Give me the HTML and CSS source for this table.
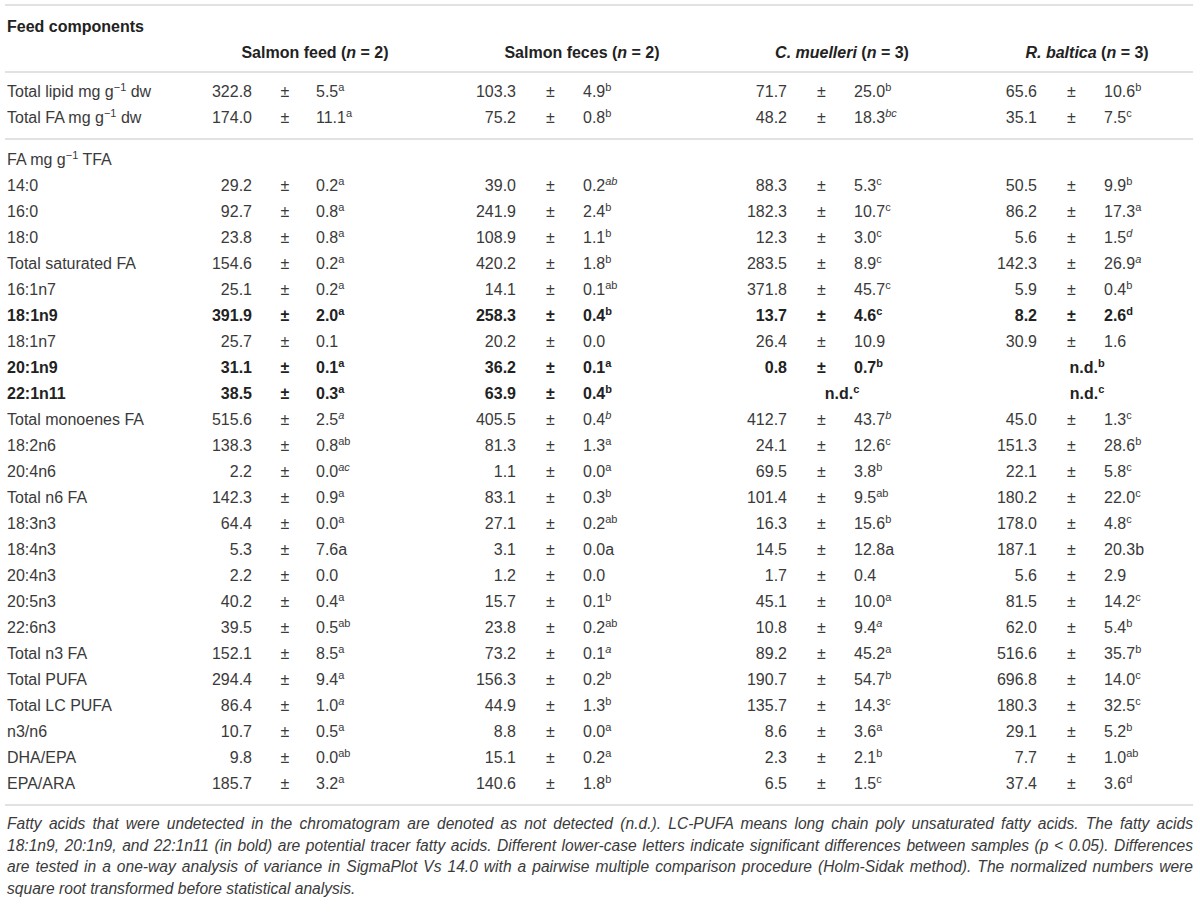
FILE: index.html
```html
<!DOCTYPE html>
<html>
<head>
<meta charset="utf-8">
<link rel="stylesheet" href="styles.css">
</head>
<body>
<div class="page">
<table class="ft">
<colgroup>
<col class="c-lab">
<col class="c-v1"><col class="c-pm1"><col class="c-sd1">
<col class="c-v2"><col class="c-pm"><col class="c-sd2">
<col class="c-v3"><col class="c-pm"><col class="c-sd3">
<col class="c-v4"><col class="c-pm"><col class="c-sd4">
</colgroup>
<thead>
<tr class="first"><th class="lab" colspan="13">Feed components</th></tr>
<tr class="last"><th></th>
<th colspan="3" class="grp">Salmon feed (<i>n</i> = 2)</th>
<th colspan="3" class="grp">Salmon feces (<i>n</i> = 2)</th>
<th colspan="3" class="grp"><i>C. muelleri</i> (<i>n</i> = 3)</th>
<th colspan="3" class="grp"><i>R. baltica</i> (<i>n</i> = 3)</th>
</tr>
</thead>
<tbody class="sec">
<tr class="first"><td class="lab">Total lipid mg g<sup class="u">−1</sup> dw</td>
<td class="v">322.8</td><td class="pm">±</td><td class="sd">5.5<sup>a</sup></td>
<td class="v">103.3</td><td class="pm">±</td><td class="sd">4.9<sup>b</sup></td>
<td class="v">71.7</td><td class="pm">±</td><td class="sd">25.0<sup>b</sup></td>
<td class="v">65.6</td><td class="pm">±</td><td class="sd">10.6<sup>b</sup></td></tr>
<tr class="last"><td class="lab">Total FA mg g<sup class="u">−1</sup> dw</td>
<td class="v">174.0</td><td class="pm">±</td><td class="sd">11.1<sup>a</sup></td>
<td class="v">75.2</td><td class="pm">±</td><td class="sd">0.8<sup>b</sup></td>
<td class="v">48.2</td><td class="pm">±</td><td class="sd">18.3<sup><i>bc</i></sup></td>
<td class="v">35.1</td><td class="pm">±</td><td class="sd">7.5<sup>c</sup></td></tr>
</tbody>
<tbody class="sec">
<tr class="first"><td class="lab" colspan="13">FA mg g<sup class="u">−1</sup> TFA</td></tr>
<tr><td class="lab">14:0</td>
<td class="v">29.2</td><td class="pm">±</td><td class="sd">0.2<sup>a</sup></td>
<td class="v">39.0</td><td class="pm">±</td><td class="sd">0.2<sup><i>ab</i></sup></td>
<td class="v">88.3</td><td class="pm">±</td><td class="sd">5.3<sup>c</sup></td>
<td class="v">50.5</td><td class="pm">±</td><td class="sd">9.9<sup>b</sup></td></tr>
<tr><td class="lab">16:0</td>
<td class="v">92.7</td><td class="pm">±</td><td class="sd">0.8<sup>a</sup></td>
<td class="v">241.9</td><td class="pm">±</td><td class="sd">2.4<sup>b</sup></td>
<td class="v">182.3</td><td class="pm">±</td><td class="sd">10.7<sup>c</sup></td>
<td class="v">86.2</td><td class="pm">±</td><td class="sd">17.3<sup>a</sup></td></tr>
<tr><td class="lab">18:0</td>
<td class="v">23.8</td><td class="pm">±</td><td class="sd">0.8<sup>a</sup></td>
<td class="v">108.9</td><td class="pm">±</td><td class="sd">1.1<sup>b</sup></td>
<td class="v">12.3</td><td class="pm">±</td><td class="sd">3.0<sup>c</sup></td>
<td class="v">5.6</td><td class="pm">±</td><td class="sd">1.5<sup><i>d</i></sup></td></tr>
<tr><td class="lab">Total saturated FA</td>
<td class="v">154.6</td><td class="pm">±</td><td class="sd">0.2<sup>a</sup></td>
<td class="v">420.2</td><td class="pm">±</td><td class="sd">1.8<sup>b</sup></td>
<td class="v">283.5</td><td class="pm">±</td><td class="sd">8.9<sup>c</sup></td>
<td class="v">142.3</td><td class="pm">±</td><td class="sd">26.9<sup><i>a</i></sup></td></tr>
<tr><td class="lab">16:1n7</td>
<td class="v">25.1</td><td class="pm">±</td><td class="sd">0.2<sup>a</sup></td>
<td class="v">14.1</td><td class="pm">±</td><td class="sd">0.1<sup>ab</sup></td>
<td class="v">371.8</td><td class="pm">±</td><td class="sd">45.7<sup>c</sup></td>
<td class="v">5.9</td><td class="pm">±</td><td class="sd">0.4<sup>b</sup></td></tr>
<tr class="b"><td class="lab">18:1n9</td>
<td class="v">391.9</td><td class="pm">±</td><td class="sd">2.0<sup>a</sup></td>
<td class="v">258.3</td><td class="pm">±</td><td class="sd">0.4<sup>b</sup></td>
<td class="v">13.7</td><td class="pm">±</td><td class="sd">4.6<sup>c</sup></td>
<td class="v">8.2</td><td class="pm">±</td><td class="sd">2.6<sup>d</sup></td></tr>
<tr><td class="lab">18:1n7</td>
<td class="v">25.7</td><td class="pm">±</td><td class="sd">0.1</td>
<td class="v">20.2</td><td class="pm">±</td><td class="sd">0.0</td>
<td class="v">26.4</td><td class="pm">±</td><td class="sd">10.9</td>
<td class="v">30.9</td><td class="pm">±</td><td class="sd">1.6</td></tr>
<tr class="b"><td class="lab">20:1n9</td>
<td class="v">31.1</td><td class="pm">±</td><td class="sd">0.1<sup>a</sup></td>
<td class="v">36.2</td><td class="pm">±</td><td class="sd">0.1<sup>a</sup></td>
<td class="v">0.8</td><td class="pm">±</td><td class="sd">0.7<sup>b</sup></td>
<td class="nd" colspan="3">n.d.<sup>b</sup></td></tr>
<tr class="b"><td class="lab">22:1n11</td>
<td class="v">38.5</td><td class="pm">±</td><td class="sd">0.3<sup>a</sup></td>
<td class="v">63.9</td><td class="pm">±</td><td class="sd">0.4<sup>b</sup></td>
<td class="nd" colspan="3">n.d.<sup>c</sup></td>
<td class="nd" colspan="3">n.d.<sup>c</sup></td></tr>
<tr><td class="lab">Total monoenes FA</td>
<td class="v">515.6</td><td class="pm">±</td><td class="sd">2.5<sup><i>a</i></sup></td>
<td class="v">405.5</td><td class="pm">±</td><td class="sd">0.4<sup><i>b</i></sup></td>
<td class="v">412.7</td><td class="pm">±</td><td class="sd">43.7<sup><i>b</i></sup></td>
<td class="v">45.0</td><td class="pm">±</td><td class="sd">1.3<sup>c</sup></td></tr>
<tr><td class="lab">18:2n6</td>
<td class="v">138.3</td><td class="pm">±</td><td class="sd">0.8<sup>ab</sup></td>
<td class="v">81.3</td><td class="pm">±</td><td class="sd">1.3<sup>a</sup></td>
<td class="v">24.1</td><td class="pm">±</td><td class="sd">12.6<sup>c</sup></td>
<td class="v">151.3</td><td class="pm">±</td><td class="sd">28.6<sup>b</sup></td></tr>
<tr><td class="lab">20:4n6</td>
<td class="v">2.2</td><td class="pm">±</td><td class="sd">0.0<sup><i>ac</i></sup></td>
<td class="v">1.1</td><td class="pm">±</td><td class="sd">0.0<sup>a</sup></td>
<td class="v">69.5</td><td class="pm">±</td><td class="sd">3.8<sup>b</sup></td>
<td class="v">22.1</td><td class="pm">±</td><td class="sd">5.8<sup>c</sup></td></tr>
<tr><td class="lab">Total n6 FA</td>
<td class="v">142.3</td><td class="pm">±</td><td class="sd">0.9<sup>a</sup></td>
<td class="v">83.1</td><td class="pm">±</td><td class="sd">0.3<sup>b</sup></td>
<td class="v">101.4</td><td class="pm">±</td><td class="sd">9.5<sup>ab</sup></td>
<td class="v">180.2</td><td class="pm">±</td><td class="sd">22.0<sup>c</sup></td></tr>
<tr><td class="lab">18:3n3</td>
<td class="v">64.4</td><td class="pm">±</td><td class="sd">0.0<sup>a</sup></td>
<td class="v">27.1</td><td class="pm">±</td><td class="sd">0.2<sup>ab</sup></td>
<td class="v">16.3</td><td class="pm">±</td><td class="sd">15.6<sup>b</sup></td>
<td class="v">178.0</td><td class="pm">±</td><td class="sd">4.8<sup>c</sup></td></tr>
<tr><td class="lab">18:4n3</td>
<td class="v">5.3</td><td class="pm">±</td><td class="sd">7.6a</td>
<td class="v">3.1</td><td class="pm">±</td><td class="sd">0.0a</td>
<td class="v">14.5</td><td class="pm">±</td><td class="sd">12.8a</td>
<td class="v">187.1</td><td class="pm">±</td><td class="sd">20.3b</td></tr>
<tr><td class="lab">20:4n3</td>
<td class="v">2.2</td><td class="pm">±</td><td class="sd">0.0</td>
<td class="v">1.2</td><td class="pm">±</td><td class="sd">0.0</td>
<td class="v">1.7</td><td class="pm">±</td><td class="sd">0.4</td>
<td class="v">5.6</td><td class="pm">±</td><td class="sd">2.9</td></tr>
<tr><td class="lab">20:5n3</td>
<td class="v">40.2</td><td class="pm">±</td><td class="sd">0.4<sup>a</sup></td>
<td class="v">15.7</td><td class="pm">±</td><td class="sd">0.1<sup>b</sup></td>
<td class="v">45.1</td><td class="pm">±</td><td class="sd">10.0<sup>a</sup></td>
<td class="v">81.5</td><td class="pm">±</td><td class="sd">14.2<sup>c</sup></td></tr>
<tr><td class="lab">22:6n3</td>
<td class="v">39.5</td><td class="pm">±</td><td class="sd">0.5<sup>ab</sup></td>
<td class="v">23.8</td><td class="pm">±</td><td class="sd">0.2<sup>ab</sup></td>
<td class="v">10.8</td><td class="pm">±</td><td class="sd">9.4<sup><i>a</i></sup></td>
<td class="v">62.0</td><td class="pm">±</td><td class="sd">5.4<sup>b</sup></td></tr>
<tr><td class="lab">Total n3 FA</td>
<td class="v">152.1</td><td class="pm">±</td><td class="sd">8.5<sup>a</sup></td>
<td class="v">73.2</td><td class="pm">±</td><td class="sd">0.1<sup><i>a</i></sup></td>
<td class="v">89.2</td><td class="pm">±</td><td class="sd">45.2<sup>a</sup></td>
<td class="v">516.6</td><td class="pm">±</td><td class="sd">35.7<sup>b</sup></td></tr>
<tr><td class="lab">Total PUFA</td>
<td class="v">294.4</td><td class="pm">±</td><td class="sd">9.4<sup>a</sup></td>
<td class="v">156.3</td><td class="pm">±</td><td class="sd">0.2<sup>b</sup></td>
<td class="v">190.7</td><td class="pm">±</td><td class="sd">54.7<sup>b</sup></td>
<td class="v">696.8</td><td class="pm">±</td><td class="sd">14.0<sup>c</sup></td></tr>
<tr><td class="lab">Total LC PUFA</td>
<td class="v">86.4</td><td class="pm">±</td><td class="sd">1.0<sup><i>a</i></sup></td>
<td class="v">44.9</td><td class="pm">±</td><td class="sd">1.3<sup>b</sup></td>
<td class="v">135.7</td><td class="pm">±</td><td class="sd">14.3<sup>c</sup></td>
<td class="v">180.3</td><td class="pm">±</td><td class="sd">32.5<sup>c</sup></td></tr>
<tr><td class="lab">n3/n6</td>
<td class="v">10.7</td><td class="pm">±</td><td class="sd">0.5<sup>a</sup></td>
<td class="v">8.8</td><td class="pm">±</td><td class="sd">0.0<sup>a</sup></td>
<td class="v">8.6</td><td class="pm">±</td><td class="sd">3.6<sup>a</sup></td>
<td class="v">29.1</td><td class="pm">±</td><td class="sd">5.2<sup>b</sup></td></tr>
<tr><td class="lab">DHA/EPA</td>
<td class="v">9.8</td><td class="pm">±</td><td class="sd">0.0<sup>ab</sup></td>
<td class="v">15.1</td><td class="pm">±</td><td class="sd">0.2<sup>a</sup></td>
<td class="v">2.3</td><td class="pm">±</td><td class="sd">2.1<sup>b</sup></td>
<td class="v">7.7</td><td class="pm">±</td><td class="sd">1.0<sup>ab</sup></td></tr>
<tr class="last"><td class="lab">EPA/ARA</td>
<td class="v">185.7</td><td class="pm">±</td><td class="sd">3.2<sup>a</sup></td>
<td class="v">140.6</td><td class="pm">±</td><td class="sd">1.8<sup>b</sup></td>
<td class="v">6.5</td><td class="pm">±</td><td class="sd">1.5<sup>c</sup></td>
<td class="v">37.4</td><td class="pm">±</td><td class="sd">3.6<sup>d</sup></td></tr>
</tbody>
</table>
<p class="note"><span class="ln">Fatty acids that were undetected in the chromatogram are denoted as not detected (n.d.). LC-PUFA means long chain poly unsaturated fatty acids. The fatty acids</span>
<span class="ln">18:1n9, 20:1n9, and 22:1n11 (in bold) are potential tracer fatty acids. Different lower-case letters indicate significant differences between samples (p &lt; 0.05). Differences</span>
<span class="ln">are tested in a one-way analysis of variance in SigmaPlot Vs 14.0 with a pairwise multiple comparison procedure (Holm-Sidak method). The normalized numbers were</span>
<span class="ln end">square root transformed before statistical analysis.</span></p>
</div>
</body>
</html>
```

FILE: styles.css
```css
html, body {
  margin: 0;
  padding: 0;
  background: #ffffff;
}

.page {
  padding: 4px 7px 0 5px;
  width: 1188px;
  font-family: "Liberation Sans", Arial, Helvetica, sans-serif;
  font-size: 16px;
  color: #3a3a3a;
}

.ft {
  width: 1188px;
  table-layout: fixed;
  border-collapse: collapse;
  border-top: 2px solid #e2e2e2;
}

.c-lab { width: 164px; }
.c-v1 { width: 87px; }
.c-pm1 { width: 58px; }
.c-sd1 { width: 147px; }
.c-v2 { width: 59px; }
.c-pm { width: 61px; }
.c-sd2 { width: 122px; }
.c-v3 { width: 88px; }
.c-sd3 { width: 129px; }
.c-v4 { width: 60px; }
.c-sd4 { width: 91px; }

.ft th,
.ft td {
  padding: 0;
  height: 26px;
  line-height: 26px;
  white-space: nowrap;
  vertical-align: middle;
}

.ft th {
  font-weight: bold;
  color: #222222;
}

.ft thead tr.first th { padding-top: 8px; }
.ft thead tr.last th { padding-bottom: 5px; }

.ft thead {
  border-bottom: 2px solid #e2e2e2;
}

.ft tbody.sec {
  border-bottom: 2px solid #e2e2e2;
}

.ft tbody tr.first td { padding-top: 6px; }
.ft tbody tr.last td { padding-bottom: 7px; }
.ft tbody.sec + tbody.sec tr.first td { padding-top: 7px; }

.lab {
  text-align: left;
  padding-left: 2px !important;
}

.grp {
  text-align: center;
}

.v {
  text-align: right;
  padding-right: 4px !important;
}

.pm {
  text-align: center;
}

.sd {
  text-align: left;
  padding-left: 2px !important;
}

.nd {
  text-align: center;
  font-weight: bold;
}

tr.b td {
  font-weight: bold;
  color: #222222;
}

sup {
  font-size: 11px;
  line-height: 0;
  vertical-align: baseline;
  position: relative;
  top: -6px;
}

sup.u {
  font-size: 11px;
}

.note {
  margin: 7px 0 0 2px;
  width: 1186px;
  font-size: 15.6px;
  font-style: italic;
  line-height: 21.7px;
  color: #3a3a3a;
}

.ln {
  display: block;
  white-space: nowrap;
  text-align: justify;
  text-align-last: justify;
}

.ln.end {
  text-align: left;
  text-align-last: left;
}
```
